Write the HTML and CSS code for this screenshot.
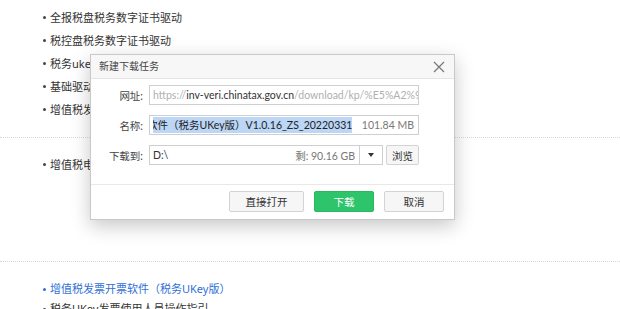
FILE: index.html
```html
<!DOCTYPE html>
<html lang="zh-CN">
<head>
  <meta charset="UTF-8" />
  <title>下载</title>
  <link rel="stylesheet" href="styles.css">
</head>
<body>

  <div class="section first">
    <ul class="list">
      <li>全报税盘税务数字证书驱动</li>
      <li>税控盘税务数字证书驱动</li>
      <li>税务ukey驱动程序</li>
      <li>基础驱动程序</li>
      <li>增值税发票开票软件（金税盘版）</li>
    </ul>
  </div>

  <div class="section second">
    <ul class="list">
      <li>增值税电子发票公共服务平台</li>
    </ul>
  </div>

  <div class="section third">
    <ul class="list">
      <li class="link">增值税发票开票软件（税务UKey版）</li>
      <li>税务UKey发票使用人员操作指引</li>
    </ul>
  </div>

  <!-- 新建下载任务 -->
  <div class="dialog">
    <div class="dialog-title">
      <span>新建下载任务</span>
      <svg class="close" width="12" height="12" viewBox="0 0 12 12">
        <path d="M1 1L11 11M11 1L1 11" stroke="#777" stroke-width="1.2" fill="none"/>
      </svg>
    </div>

    <div class="dialog-body">
      <div class="row">
        <label>网址:</label>
        <div class="field url">
          <span class="dim">https://</span><span class="host">inv-veri.chinatax.gov.cn</span><span class="dim">/download/kp/%E5%A2%9E%E5%80%BC</span>
        </div>
      </div>

      <div class="row">
        <label>名称:</label>
        <div class="field name">
          <span class="name-text"><span class="sel">软件（税务UKey版）V1.0.16_ZS_20220331</span></span>
          <span class="size">101.84 MB</span>
        </div>
      </div>

      <div class="row">
        <label>下载到:</label>
        <div class="field path">
          <span class="path-text">D:\</span>
          <span class="size">剩: 90.16 GB</span>
        </div>
        <div class="drop"><span class="caret"></span></div>
        <button class="btn small">浏览</button>
      </div>
    </div>

    <div class="dialog-foot">
      <button class="btn wide">直接打开</button>
      <button class="btn primary">下载</button>
      <button class="btn">取消</button>
    </div>
  </div>

</body>
</html>
```

FILE: styles.css
```css
* { margin: 0; padding: 0; box-sizing: border-box; }

body {
  font-family: "Noto Sans", "Noto Sans CJK SC", sans-serif;
  font-size: 11px;
  color: #333;
  background: #fff;
  width: 620px;
  height: 309px;
  overflow: hidden;
  position: relative;
}

.section { border-bottom: 1px dotted #d8d8d8; }
.section.first { padding: 6px 0 16px; }
.section.second { padding: 15px 0 0; height: 124px; }
.section.third { padding: 17px 0 0; border-bottom: none; }

.list { list-style: none; padding-left: 43px; }

.list li {
  display: flex;
  align-items: center;
  gap: 4px;
  height: 23px;
  line-height: 23px;
  white-space: nowrap;
}

.list li::before {
  content: '';
  width: 3px; height: 3px;
  border-radius: 50%;
  background: #444;
}

.third .list li { height: 20px; line-height: 20px; }
.list li.link { color: #2f6fd8; }
.list li.link::before { background: #2f6fd8; }

/* dialog */
.dialog {
  position: absolute;
  left: 90px; top: 54px;
  width: 365px;
  height: 166px;
  background: #fff;
  border: 1px solid #c9c9c9;
  box-shadow: 0 6px 18px rgba(0,0,0,0.22);
  font-family: "Lato", "Noto Sans CJK SC", sans-serif;
  font-size: 10px;
  display: flex;
  flex-direction: column;
}

.dialog-title {
  height: 24px;
  line-height: 23px;
  padding: 0 9px 0 8px;
  background: #f7f7f7;
  border-bottom: 1px solid #e5e5e5;
  color: #444;
  display: flex;
  align-items: center;
  justify-content: space-between;
}

.dialog-body {
  height: 105px;
  padding-top: 6px;
  display: flex;
  flex-direction: column;
  gap: 10px;
}

.row {
  display: flex;
  align-items: center;
  height: 20px;
}

.row label {
  width: 52px;
  text-align: right;
  margin-right: 6px;
  color: #444;
  font-size: 10.5px;
}

.field {
  height: 20px;
  border: 1px solid #cfcfcf;
  display: flex;
  align-items: center;
  padding: 0 4px 0 3px;
  white-space: nowrap;
  overflow: hidden;
  color: #333;
  font-size: 10.5px;
}

.field.url, .field.name { width: 270px; }
.field.path { width: 211px; justify-content: space-between; }

.dim { color: #b0b0b0; }
.host { color: #333; }

.name-text {
  flex: 1;
  overflow: hidden;
}
.sel {
  display: inline-block;
  margin-left: -6px;
  background: #bcd6f6;
  color: #222;
  line-height: 16px;
}

.size { color: #777; margin-left: 8px; }

.drop {
  width: 23px; height: 20px;
  border: 1px solid #cfcfcf;
  border-left: none;
  display: flex;
  align-items: center;
  justify-content: center;
  margin-right: 3px;
}
.caret {
  border-left: 3px solid transparent;
  border-right: 3px solid transparent;
  border-top: 4px solid #333;
}

.btn {
  font-family: inherit;
  font-size: 10.5px;
  color: #333;
  height: 21px;
  width: 60px;
  background: #f6f6f6;
  border: 1px solid #d3d3d3;
  border-radius: 2px;
}
.btn.small { width: 33px; height: 20px; }
.btn.wide { width: 75px; }
.btn.primary {
  background: #2ec46c;
  border-color: #2ab863;
  color: #fff;
}

.dialog-foot {
  flex: 1;
  border-top: 1px solid #e8e8e8;
  display: flex;
  justify-content: flex-end;
  align-items: flex-start;
  gap: 10px;
  padding: 6px 10px 0 0;
}
```
